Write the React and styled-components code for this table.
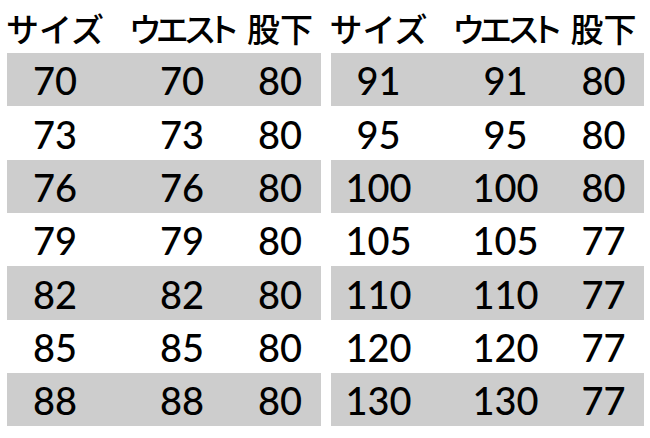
import React from "react";
import styled, { createGlobalStyle } from "styled-components";

const GlobalStyle = createGlobalStyle`
	html, body {
		margin: 0;
		padding: 0;
		background: #fff;
	}
	body {
		font-family: Lato, "Noto Sans CJK JP", sans-serif;
		color: #000;
	}
`;

const Page = styled.div`
	width: 650px;
	height: 438px;
	box-sizing: border-box;
	padding: 0 6px 0 7px;
	display: flex;
	gap: 10px;
	background: #fff;
`;

const Table = styled.div`
	width: 314px;
	display: flex;
	flex-direction: column;
`;

const Row = styled.div`
	display: grid;
	grid-template-columns: 96px 158px 38px;
	height: ${(p) => p.$h}px;
	background: ${(p) => (p.$shade ? "#cdcdcd" : "transparent")};
`;

const Cell = styled.div`
	display: flex;
	align-items: center;
	justify-content: center;
	white-space: nowrap;
	font-family: Lato, "Open Sans", sans-serif;
	font-size: 38px;
	line-height: 1;
	font-weight: 500;
	padding-top: 1px;
`;

const HeadCell = styled(Cell)`
	font-family: "Noto Sans CJK JP", sans-serif;
	font-size: 33px;
	font-weight: 500;
	letter-spacing: ${(p) => p.$tight || 0}px;
	font-feature-settings: ${(p) => (p.$tight ? '"palt"' : "normal")};
	padding-top: 4px;
`;

const left = [
	[70, 70, 80],
	[73, 73, 80],
	[76, 76, 80],
	[79, 79, 80],
	[82, 82, 80],
	[85, 85, 80],
	[88, 88, 80],
];

const right = [
	[91, 91, 80],
	[95, 95, 80],
	[100, 100, 80],
	[105, 105, 77],
	[110, 110, 77],
	[120, 120, 77],
	[130, 130, 77],
];

// row heights that add up to 373px (53.3 each)
const heights = [53, 54, 53, 53, 54, 53, 53];

function SizeTable({ rows }) {
	return (
		<Table>
			<Row $h={53}>
				<HeadCell>サイズ</HeadCell>
				<HeadCell $tight={-3}>ウエスト</HeadCell>
				<HeadCell>股下</HeadCell>
			</Row>
			{rows.map((r, i) => (
				<Row key={i} $h={heights[i]} $shade={i % 2 === 0}>
					<Cell>{r[0]}</Cell>
					<Cell>{r[1]}</Cell>
					<Cell>{r[2]}</Cell>
				</Row>
			))}
		</Table>
	);
}

export default function App() {
	return (
		<>
			<GlobalStyle />
			<Page>
				<SizeTable rows={left} />
				<SizeTable rows={right} />
			</Page>
		</>
	);
}
